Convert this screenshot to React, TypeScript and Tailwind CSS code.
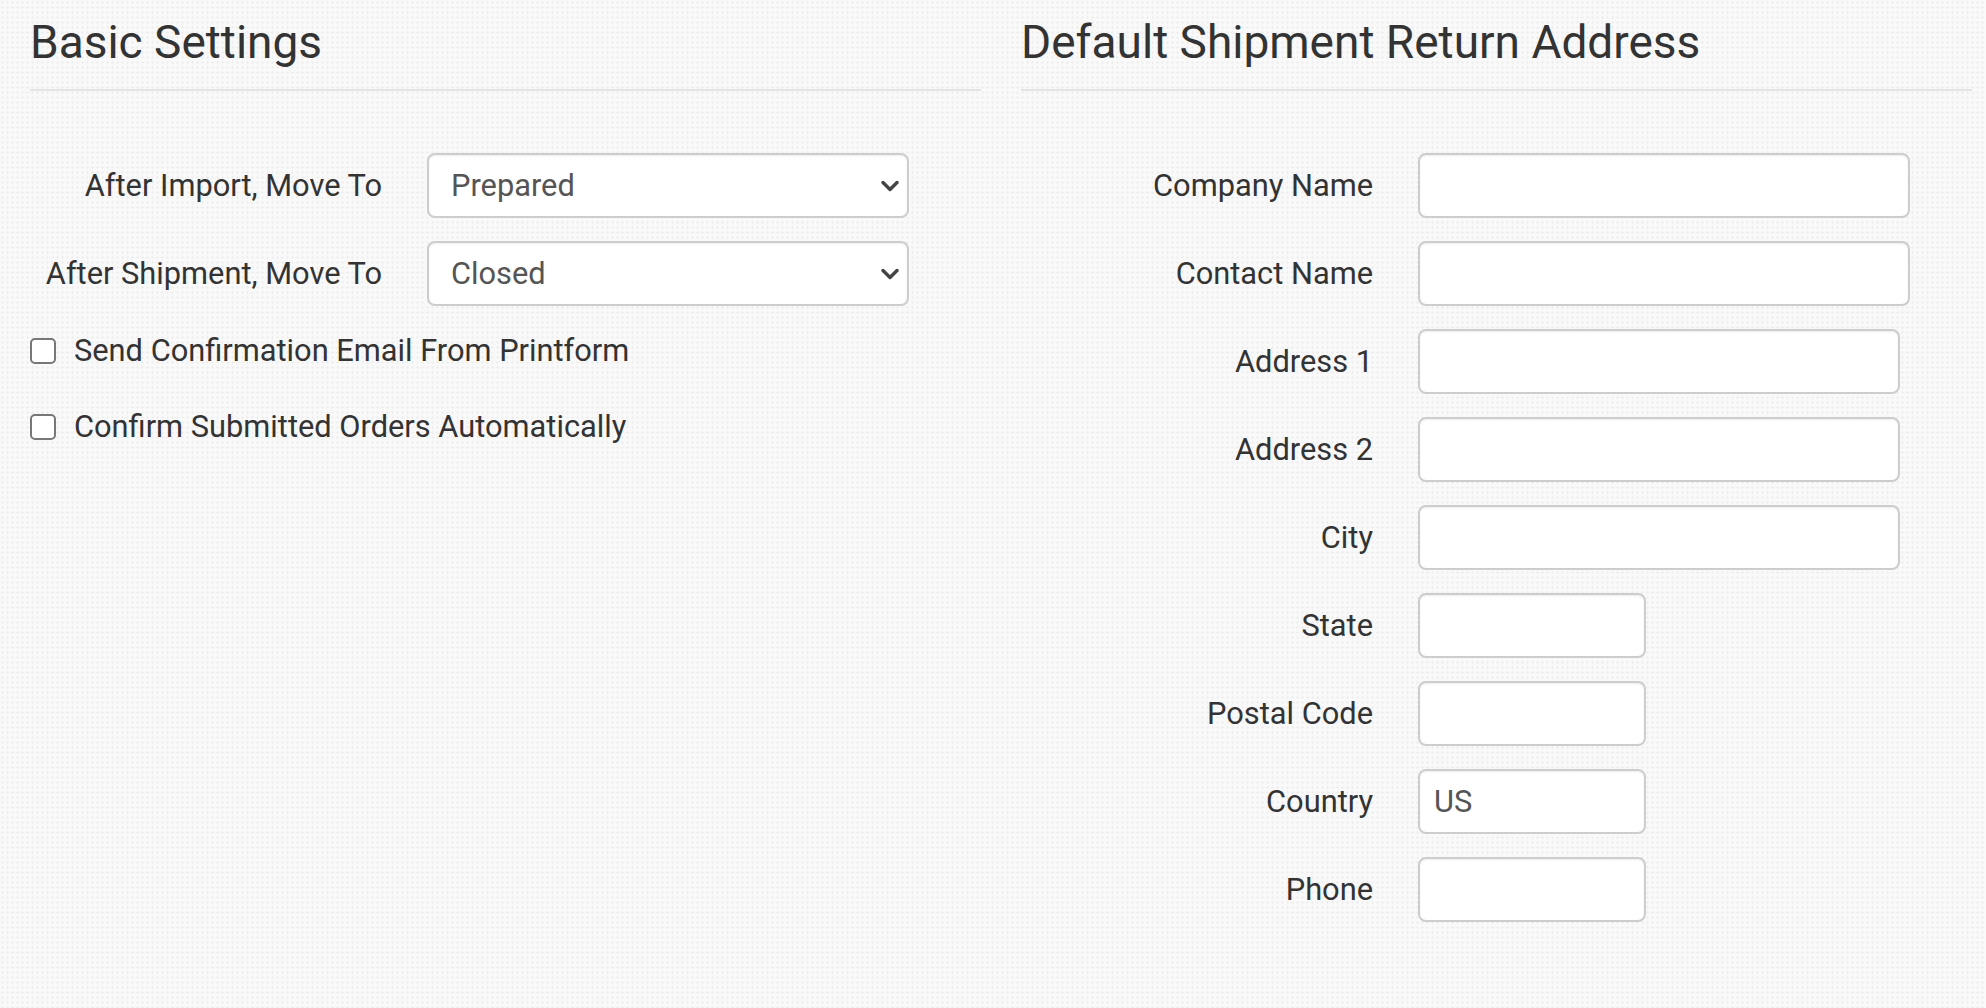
import { ChangeEvent, useState } from 'react';

const ChevronDown = () => (
  <svg className="pointer-events-none absolute right-[10px] top-1/2 -translate-y-1/2" width="18" height="12" viewBox="0 0 18 12" fill="none">
    <path d="M2 2.5 L9 9.5 L16 2.5" stroke="#444" strokeWidth="3.4" strokeLinecap="round" strokeLinejoin="round" />
  </svg>
);

const Heading = ({ children }: { children: string }) => (
  <h3 className="text-[46px] font-normal leading-[1.2] text-[#333] pt-[15px] pb-[19px] border-b-2 border-[#e4e4e4]">
    {children}
  </h3>
);

type SelectRowProps = { label: string; value: string; options: string[]; onChange: (v: string) => void };

const SelectRow = ({ label, value, options, onChange }: SelectRowProps) => (
  <div className="flex items-center mb-[23px]">
    <label className="w-[352px] text-right text-[#333]">{label}</label>
    <div className="relative ml-[45px] w-[482px]">
      <select
        value={value}
        onChange={(e: ChangeEvent<HTMLSelectElement>) => onChange(e.target.value)}
        className="appearance-none w-full h-[65px] pl-[22px] pr-[40px] bg-white border-2 border-[#cdcdcd] rounded-[8px] text-[#555] text-[30.8px] outline-none shadow-[inset_0_1px_2px_rgba(0,0,0,0.08)]"
      >
        {options.map(o => (
          <option key={o} value={o}>{o}</option>
        ))}
      </select>
      <ChevronDown />
    </div>
  </div>
);

const CheckRow = ({ label }: { label: string }) => (
  <label className="flex items-center h-[45px] mb-[32px] -mt-[1px] text-[#333]">
    <input type="checkbox" className="appearance-none w-[26px] h-[26px] border-2 border-[#777] rounded-[5px] bg-white" />
    <span className="ml-[18px]">{label}</span>
  </label>
);

const fields = [
  { label: 'Company Name', width: 'w-[492px]', value: '' },
  { label: 'Contact Name', width: 'w-[492px]', value: '' },
  { label: 'Address 1', width: 'w-[482px]', value: '' },
  { label: 'Address 2', width: 'w-[482px]', value: '' },
  { label: 'City', width: 'w-[482px]', value: '' },
  { label: 'State', width: 'w-[228px]', value: '' },
  { label: 'Postal Code', width: 'w-[228px]', value: '' },
  { label: 'Country', width: 'w-[228px]', value: 'US' },
  { label: 'Phone', width: 'w-[228px]', value: '' },
];

export default function App() {
  const [afterImport, setAfterImport] = useState('Prepared');
  const [afterShipment, setAfterShipment] = useState('Closed');
  const statuses = ['Prepared', 'Closed', 'Open', 'Pending'];

  return (
    <div
      className="min-h-screen bg-[#f9f9f9] bg-[radial-gradient(#efefef_1px,transparent_1.3px)] bg-[length:5px_5px] text-[30.8px] leading-[1.5] pl-[30px] pr-[14px]"
      style={{ fontFamily: 'Roboto, "Liberation Sans", sans-serif' }}
    >
      <div className="grid grid-cols-2 gap-[40px]">
        {/* Basic settings */}
        <div>
          <Heading>Basic Settings</Heading>
          <div className="pt-[62px]">
            <SelectRow label="After Import, Move To" value={afterImport} options={statuses} onChange={setAfterImport} />
            <SelectRow label="After Shipment, Move To" value={afterShipment} options={statuses} onChange={setAfterShipment} />
            <CheckRow label="Send Confirmation Email From Printform" />
            <CheckRow label="Confirm Submitted Orders Automatically" />
          </div>
        </div>

        {/* Return address */}
        <div>
          <Heading>Default Shipment Return Address</Heading>
          <div className="pt-[62px]">
            {fields.map(f => (
              <div key={f.label} className="flex items-center mb-[23px]">
                <label className="w-[352px] text-right text-[#333]">{f.label}</label>
                <input
                  type="text"
                  defaultValue={f.value}
                  className={`${f.width} ml-[45px] h-[65px] px-[14px] bg-white border-2 border-[#cdcdcd] rounded-[8px] text-[#555] text-[30.8px] outline-none shadow-[inset_0_1px_2px_rgba(0,0,0,0.08)]`}
                />
              </div>
            ))}
          </div>
        </div>
      </div>
    </div>
  );
}
